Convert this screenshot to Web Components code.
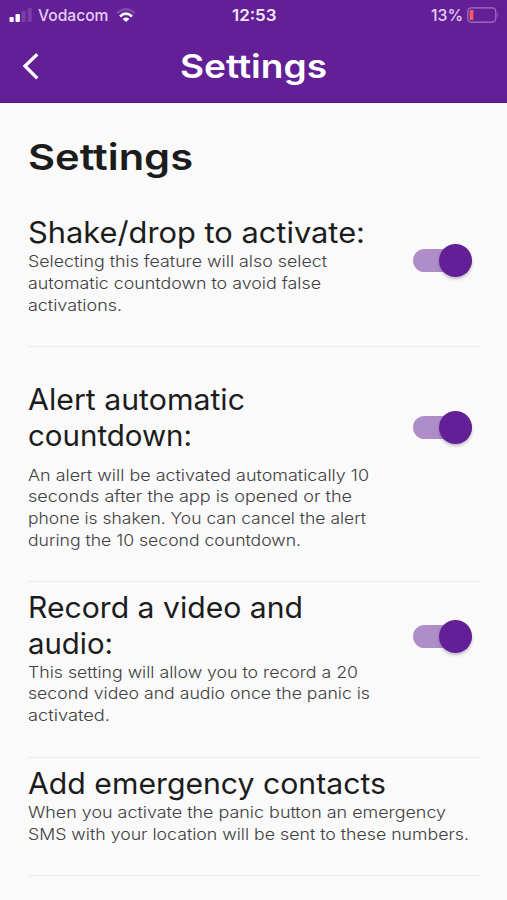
<!DOCTYPE html>
<html lang="en">
<head>
<meta charset="utf-8">
<title>Settings</title>
<style>
  html, body { margin: 0; height: 100%; background: #fafafa; overflow: hidden; }
  body { font-family: Inter, "Open Sans", sans-serif; color: #1c1c1c; }
</style>
</head>
<body>
<settings-app></settings-app>

<script>
// One line of text, widened so that it takes the given width
class FitLine extends HTMLElement {
  constructor() {
    super();
    this.attachShadow({mode: 'open'}).innerHTML = '<style>' +
    ':host { display: block; white-space: nowrap; }' +
    'span { display: inline-block; transform-origin: 0 50%; }' +
    '</style><span><slot></slot></span>';
  }

  connectedCallback() {
    var span = this.shadowRoot.querySelector('span');
    var width = parseFloat(this.getAttribute('width'));
    span.style.transform = 'scaleX(' + width / span.getBoundingClientRect().width + ')';
    this.style.width = width + 'px';
  }
}

class StatusBar extends HTMLElement {
  constructor() {
    super();
    this.attachShadow({mode: 'open'}).innerHTML = `
      <style>
        :host { display: grid; grid-template-columns: 1fr auto 1fr; align-items: center;
          height: 30px; padding: 0 8px 0 9px; color: #e6cff5; font-size: 16px; font-weight: 500; }
        div { display: flex; align-items: center; }
        .time { color: #f3e6fb; font-weight: 600; }
        .right { justify-content: flex-end; gap: 4px; }
        .signal { margin-right: 6px; }
        .wifi { margin-left: 7px; }
        svg { display: block; flex: none; }
      </style>
      <div>
        <svg class="signal" width="23" height="14" viewBox="0 0 23 14">
          <rect x="0.5" y="9" width="4.2" height="5" rx="1" fill="#fff"/>
          <rect x="6.5" y="6" width="4.4" height="8" rx="1" fill="#fff"/>
          <rect x="12.5" y="3" width="4.2" height="11" rx="1" fill="#7a3fa6"/>
          <rect x="18.6" y="0" width="4.2" height="14" rx="1" fill="#7a3fa6"/>
        </svg>
        <fit-line width="70.5">Vodacom</fit-line>
        <svg class="wifi" width="20" height="15" viewBox="0 0 20 15">
          <path d="M1 5.2Q10-2.6 19 5.2" fill="none" stroke="#8148ab" stroke-width="2.4"/>
          <path d="M4 8.4Q10 3 16 8.4" fill="none" stroke="#fff" stroke-width="2.7"/>
          <path d="M10 14L6.6 10.9Q10 8.2 13.4 10.9Z" fill="#fff"/>
        </svg>
      </div>
      <div class="time"><fit-line width="44.5">12:53</fit-line></div>
      <div class="right">
        <fit-line width="32">13%</fit-line>
        <svg width="32" height="16" viewBox="0 0 32 16">
          <rect x="0.8" y="0.8" width="28" height="14.4" rx="3.6" fill="none" stroke="#a375c6" stroke-width="1.2"/>
          <rect x="2.6" y="3" width="3.8" height="10" rx="1.2" fill="#f25c5f"/>
          <path d="M30.4 5.5Q32 8 30.4 10.5Z" fill="#a375c6"/>
        </svg>
      </div>`;
  }
}

class NavBar extends HTMLElement {
  constructor() {
    super();
    this.attachShadow({mode: 'open'}).innerHTML = `
      <style>
        :host { display: grid; grid-template-columns: 1fr auto 1fr; align-items: center;
          height: 73px; box-sizing: border-box; color: #fff;
          font-size: 32.5px; line-height: 40px; font-weight: 600; }
        svg { display: block; margin: 0 0 1px 21px; }
        ::slotted(*) { margin-top: 1px; }
      </style>
      <svg width="20" height="30" viewBox="0 0 20 30">
        <path d="M16.3 3.2L4 15L16.3 27.3" fill="none" stroke="#fff" stroke-width="3.3"/>
      </svg>
      <slot></slot>`;
  }
}

class ToggleSwitch extends HTMLElement {
  constructor() {
    super();
    this.attachShadow({mode: 'open'}).innerHTML = `
      <style>
        :host { display: flex; align-items: center; width: 59px; height: 33px; flex: none; }
        .track { display: flex; align-items: center; justify-content: flex-end;
          width: 59px; height: 23px; border-radius: 12px; background: #ae8dc9; }
        .thumb { width: 33px; height: 33px; border-radius: 50%; background: #621f96; flex: none;
          box-shadow: 0 2px 3px rgba(40, 20, 60, .28); }
      </style>
      <div class="track"><div class="thumb"></div></div>`;
  }
}

class SettingRow extends HTMLElement {
  constructor() {
    super();
    this.attachShadow({mode: 'open'}).innerHTML = `
      <style>
        :host { display: flex; align-items: flex-start; justify-content: space-between;
          box-sizing: border-box; padding-top: 7px; border-bottom: 1px solid #ececec; }
        .title { font-size: 29.5px; line-height: 36.4px; }
        .text { font-size: 16.4px; line-height: 21.6px; font-weight: 300; color: #404040;
          margin-top: var(--text-gap, 1px); }
        ::slotted(toggle-switch) { margin: var(--switch-top, 30px) 8px 0 0; }
      </style>
      <div>
        <div class="title"><slot name="title"></slot></div>
        <div class="text"><slot></slot></div>
      </div>
      <slot name="control"></slot>`;
  }
}

class SettingsApp extends HTMLElement {
  constructor() {
    super();
    this.attachShadow({mode: 'open'}).innerHTML = `
      <style>
        :host { display: block; height: 900px; overflow: hidden; }
        header { height: 103px; background: #621f96; box-shadow: inset 0 -1px #501681; }
        main { padding: 0 27px 0 28px; }
        h1 { margin: 0; padding-top: 31px; height: 72px; font-size: 36px; line-height: 46px; font-weight: 600; }
        .shake { height: 141px; padding-top: 8px; --switch-top: 30px; }
        .alert { height: 235px; padding-top: 34px; --text-gap: 11px; --switch-top: 30px; }
        .record { height: 176px; --text-gap: 0px; --switch-top: 31px; }
        .contacts { height: 118px; }
      </style>
      <header>
        <status-bar></status-bar>
        <nav-bar><fit-line width="147">Settings</fit-line></nav-bar>
      </header>
      <main>
        <h1><fit-line width="165">Settings</fit-line></h1>
        <setting-row class="shake">
          <fit-line slot="title" width="337">Shake/drop to activate:</fit-line>
          <fit-line width="299">Selecting this feature will also select</fit-line>
          <fit-line width="293">automatic countdown to avoid false</fit-line>
          <fit-line width="94">activations.</fit-line>
          <toggle-switch slot="control"></toggle-switch>
        </setting-row>
        <setting-row class="alert">
          <fit-line slot="title" width="217">Alert automatic</fit-line>
          <fit-line slot="title" width="164">countdown:</fit-line>
          <fit-line width="341">An alert will be activated automatically 10</fit-line>
          <fit-line width="324">seconds after the app is opened or the</fit-line>
          <fit-line width="338">phone is shaken. You can cancel the alert</fit-line>
          <fit-line width="273">during the 10 second countdown.</fit-line>
          <toggle-switch slot="control"></toggle-switch>
        </setting-row>
        <setting-row class="record">
          <fit-line slot="title" width="275">Record a video and</fit-line>
          <fit-line slot="title" width="85">audio:</fit-line>
          <fit-line width="330">This setting will allow you to record a 20</fit-line>
          <fit-line width="342">second video and audio once the panic is</fit-line>
          <fit-line width="82">activated.</fit-line>
          <toggle-switch slot="control"></toggle-switch>
        </setting-row>
        <setting-row class="contacts">
          <fit-line slot="title" width="358">Add emergency contacts</fit-line>
          <fit-line width="418">When you activate the panic button an emergency</fit-line>
          <fit-line width="441">SMS with your location will be sent to these numbers.</fit-line>
        </setting-row>
      </main>`;
  }
}

// fit-line goes last: it measures itself inside the finished layout
window.customElements.define('settings-app', SettingsApp);
window.customElements.define('status-bar', StatusBar);
window.customElements.define('nav-bar', NavBar);
window.customElements.define('setting-row', SettingRow);
window.customElements.define('toggle-switch', ToggleSwitch);
window.customElements.define('fit-line', FitLine);
</script>
</body>
</html>
